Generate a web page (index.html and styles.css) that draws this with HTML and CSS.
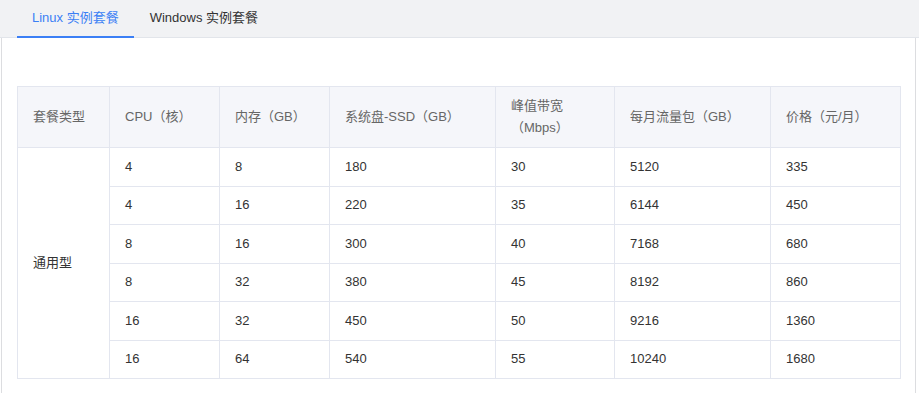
FILE: index.html
```html
<!DOCTYPE html>
<html lang="zh-CN">
<head>
<meta charset="utf-8">
<title>实例套餐</title>
<link rel="stylesheet" href="styles.css">
</head>
<body>
<div class="tabs">
  <div class="tab active">Linux 实例套餐</div>
  <div class="tab">Windows 实例套餐</div>
</div>
<div class="panel">
  <table class="plans">
    <colgroup>
      <col class="c1"><col class="c2"><col class="c3"><col class="c4"><col class="c5"><col class="c6"><col class="c7">
    </colgroup>
    <thead>
      <tr>
        <th>套餐类型</th>
        <th>CPU（核）</th>
        <th>内存（GB）</th>
        <th>系统盘-SSD（GB）</th>
        <th>峰值带宽（Mbps）</th>
        <th>每月流量包（GB）</th>
        <th>价格（元/月）</th>
      </tr>
    </thead>
    <tbody>
      <tr><td rowspan="6">通用型</td><td>4</td><td>8</td><td>180</td><td>30</td><td>5120</td><td>335</td></tr>
      <tr><td>4</td><td>16</td><td>220</td><td>35</td><td>6144</td><td>450</td></tr>
      <tr><td>8</td><td>16</td><td>300</td><td>40</td><td>7168</td><td>680</td></tr>
      <tr><td>8</td><td>32</td><td>380</td><td>45</td><td>8192</td><td>860</td></tr>
      <tr><td>16</td><td>32</td><td>450</td><td>50</td><td>9216</td><td>1360</td></tr>
      <tr><td>16</td><td>64</td><td>540</td><td>55</td><td>10240</td><td>1680</td></tr>
    </tbody>
  </table>
</div>
</body>
</html>
```

FILE: styles.css
```css
html, body {
  margin: 0;
  padding: 0;
  background: #fff;
}
body {
  font-family: "Liberation Sans", Arial, "Noto Sans CJK SC", sans-serif;
  font-size: 13px;
  color: #333;
}
.tabs {
  display: flex;
  height: 38px;
  box-sizing: border-box;
  background: #f1f2f4;
  border-bottom: 1px solid #e2e5ea;
  padding-left: 17px;
}
.tab {
  padding: 0 15px;
  line-height: 36px;
  height: 37px;
  box-sizing: border-box;
  color: #333;
  font-size: 13px;
  position: relative;
}
.tab + .tab {
  padding-left: 16px;
}
.tab.active {
  color: #3b7ff5;
  border-bottom: 2px solid #3b7ff5;
  margin-bottom: -1px;
  height: 38px;
}
.panel {
  margin-left: 1px;
  width: 915px;
  box-sizing: border-box;
  border-left: 1px solid #dcdde0;
  border-right: 1px solid #dcdde0;
  padding: 48px 15px 20px 15px;
  height: 355px;
}
.plans {
  border-collapse: collapse;
  table-layout: fixed;
  width: 883px;
}
.c1 { width: 92px; }
.c2 { width: 110px; }
.c3 { width: 110px; }
.c4 { width: 166px; }
.c5 { width: 119px; }
.c6 { width: 156px; }
.c7 { width: 130px; }
.plans th,
.plans td {
  border: 1px solid #e3e6ef;
  padding: 0 15px;
  text-align: left;
  vertical-align: middle;
}
.plans th {
  background: #f5f6fa;
  color: #666;
  font-weight: normal;
  line-height: 22px;
  height: 60px;
}
.plans td {
  height: 37.5px;
  line-height: 20px;
  color: #333;
}
```
